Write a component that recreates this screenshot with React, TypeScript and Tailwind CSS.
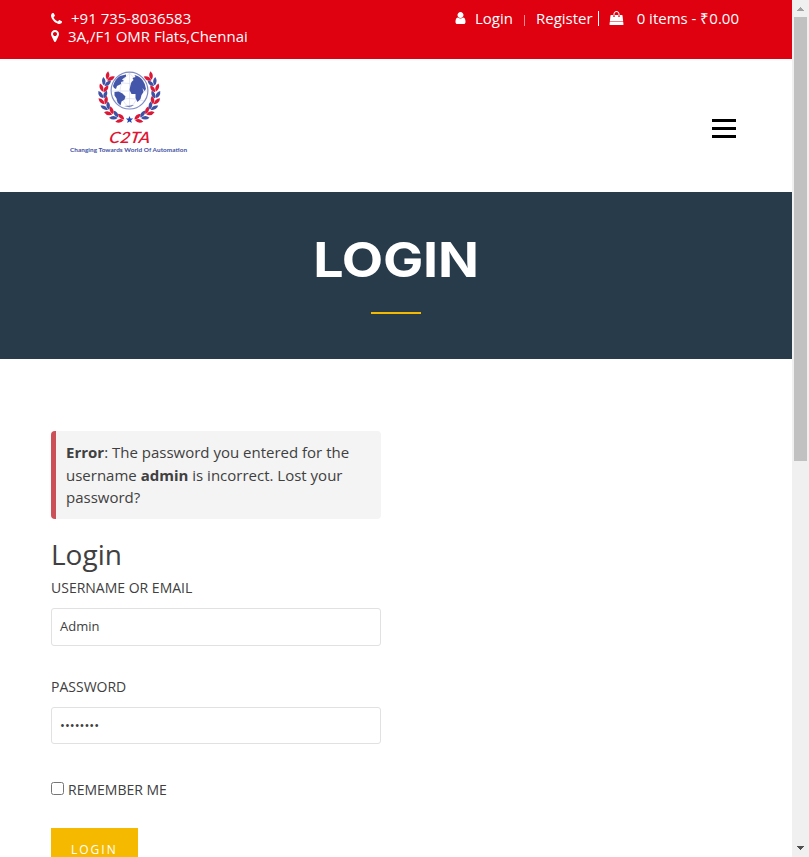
import React from "react";

const PHONE =
  "M1600 1240q0 27-10 70.5t-21 68.5q-21 50-122 106-94 51-186 51-27 0-53-3.5t-57.5-12.5-47-14.5-55.5-20.5-49-18q-98-35-175-83-127-79-264-216t-216-264q-48-77-83-175-3-9-18-49t-20.5-55.5-14.5-47-12.5-57.5-3.5-53q0-92 51-186 56-101 106-122 25-11 68.5-21t70.5-10q14 0 21 3 18 6 53 76 11 19 30 54t35 63.5 31 53.5q3 4 17.5 25t21.5 35.5 7 28.5q0 20-28.5 50t-62 55-62 53-28.5 46q0 9 5 22.5t8.5 20.5 14 24 11.5 19q76 137 174 235t235 174q2 1 19 11.5t24 14 20.5 8.5 22.5 5q18 0 46-28.5t53-62 55-62 50-28.5q14 0 28.5 7t35.5 21.5 25 17.5q25 15 53.5 31t63.5 35 54 30q70 35 76 53 3 7 3 21z";
const MARKER =
  "M1152 640q0-106-75-181t-181-75-181 75-75 181 75 181 181 75 181-75 75-181zm256 0q0 109-33 179l-364 774q-16 33-47.5 52t-67.5 19-67.5-19-46.5-52l-365-774q-33-70-33-179 0-212 150-362t362-150 362 150 150 362z";
const USER =
  "M1536 1399q0 109-62.5 187t-150.5 78h-854q-88 0-150.5-78t-62.5-187q0-85 8.5-160.5t31.5-152 58.5-131 94-89 134.5-34.5q131 128 313 128t313-128q76 0 134.5 34.5t94 89 58.5 131 31.5 152 8.5 160.5zm-256-887q0 159-112.5 271.5t-271.5 112.5-271.5-112.5-112.5-271.5 112.5-271.5 271.5-112.5 271.5 112.5 112.5 271.5z";
const BAG =
  "M1757 1408l35 313q3 28-16 50-19 21-48 21h-1664q-29 0-48-21-19-22-16-50l35-313h1722zm-93-839l86 775h-1708l86-775q3-24 21-40.5t43-16.5h256v128q0 53 37.5 90.5t90.5 37.5 90.5-37.5 37.5-90.5v-128h384v128q0 53 37.5 90.5t90.5 37.5 90.5-37.5 37.5-90.5v-128h256q25 0 43 16.5t21 40.5zm-384-185v256q0 26-19 45t-45 19-45-19-19-45v-256q0-106-75-181t-181-75-181 75-75 181v256q0 26-19 45t-45 19-45-19-19-45v-256q0-159 112.5-271.5t271.5-112.5 271.5 112.5 112.5 271.5z";

function Leaves() {
  const steps = [0, 1, 2, 3, 4, 5, 6, 7, 8];
  return (
    <>
      {steps.map((i) => {
        const angle = 110 + i * 13.8;
        const rad = (angle * Math.PI) / 180;
        const leaf = (r: number, turn: number, fill: string) => (
          <path
            d="M-4.300 0Q0-3.600 4.300 0Q0 3.600-4.300 0z"
            fill={fill}
            transform={`translate(${r * Math.cos(rad)} ${r * Math.sin(rad)}) rotate(${angle + turn})`}
          />
        );
        return (
          <g key={i}>
            {leaf(24, 112, i % 2 ? "#3f51a5" : "#dc1837")}
            {leaf(28.6, 58, i % 2 ? "#3f51a5" : "#dc1837")}
          </g>
        );
      })}
    </>
  );
}

function Logo() {
  return (
    <svg width="120" height="92" viewBox="69 66 120 92" className="block" aria-label="C2TA">
      <g transform="translate(129.3 94)">
        <Leaves />
        <g transform="scale(-1 1)">
          <Leaves />
        </g>
      </g>
      <circle cx="129.5" cy="90.6" r="18.4" fill="#fff" stroke="#7f8bc4" strokeWidth="1.2" />
      <g fill="none" stroke="#d3d7ea" strokeWidth=".6">
        <path d="M129.500 73v35M112 91h35M115 81q14 5 29 0M115 101q14-5 29 0M129.500 73q-19 18 0 35M129.500 73q19 18 0 35" />
      </g>
      <g fill="#4456aa">
        <path d="M113 86q2-7 7-10l6-1.500 0 2-4 3 2 1.500-3 1 0 2-4 2-1 3-2-1z" />
        <path d="M114.500 92l4-.5 4 2 3 3-1 3-3 2-1 4-3-3-1-4-2-3z" />
        <path d="M131.500 82l2-2-1-2 3-1-1-2q5 1 8 5 3 4 3.500 9l-1.500 2-2-3 1 4-2 3-1 4-3 3-2-4 0-4-4 0-2-4 1-5z" />
        <path d="M124 106q6 0 10-1-3 3-10 1z" />
      </g>
      <path d="M129.500 116l1 2.500 2.700.1-2.100 1.700.7 2.600-2.300-1.500-2.300 1.500.7-2.600-2.100-1.700 2.700-.1z" fill="#2447b0" />
      <g transform="translate(108.500 143) skewX(-10)">
        <text fill="#e01534" fontSize="15.500" fontFamily="Lato, sans-serif" fontStyle="italic" fontWeight="600" textLength="41" lengthAdjust="spacingAndGlyphs">C2TA</text>
      </g>
      <text x="70" y="152.300" fill="#3f51a5" fontSize="6.400" fontFamily="Lato, sans-serif" fontWeight="700" textLength="117">Changing Towards World Of Automation</text>
    </svg>
  );
}

function TopBar() {
  return (
    <div className="flex h-[59px] justify-between bg-[#df0010] pl-[51px] pr-[53px] pt-[9px] text-[15px] leading-[18px] text-white">
      <div className="whitespace-nowrap">
        <div className="flex items-center">
          <svg width="11" height="11" viewBox="192 128 1408 1408" fill="currentColor" className="mr-[9px]"><path d={PHONE} /></svg>
          +91 735-8036583
        </div>
        <div className="flex items-center">
          <svg width="8" height="12" viewBox="384 128 1024 1536" fill="currentColor" className="mr-[9px]"><path d={MARKER} /></svg>
          3A,/F1 OMR Flats,Chennai
        </div>
      </div>
      <div className="flex h-[18px] items-center whitespace-nowrap">
        <svg width="11" height="12" viewBox="256 128 1280 1536" fill="currentColor" className="mr-[9px]"><path d={USER} /></svg>
        <span>Login</span>
        <span className="ml-[11px] mr-[11px] mt-1 h-[11px] w-px bg-[#f58a90]" />
        <span>Register</span>
        <span className="ml-[5px] mr-2.5 h-[15px] w-px bg-white" />
        <svg width="15" height="14" viewBox="0 0 1792 1792" fill="currentColor" className="mr-[13px]"><path d={BAG} /></svg>
        <span>0 items - ₹0.00</span>
      </div>
    </div>
  );
}

function Scrollbar() {
  return (
    <div className="flex h-[857px] w-[17px] flex-col items-center bg-[#f0f0f0]">
      <svg width="17" height="17" shapeRendering="crispEdges" className="shrink-0"><path d="M8 7h1v1h1v1h1v1h1v1H5v-1h1V9h1V8h1z" fill="#a3a3a3" /></svg>
      <div className="h-[444px] w-[13px] bg-[#c1c1c1]" />
      <svg width="17" height="17" shapeRendering="crispEdges" className="mt-auto shrink-0"><path d="M5 6h7v1h-1v1h-1v1H9v1H8V9H7V8H6V7H5z" fill="#505050" /></svg>
    </div>
  );
}

export default function App() {
  return (
    <div className="flex h-[857px] w-[809px] overflow-hidden bg-white font-['Open_Sans',sans-serif] text-[#404040]">
      <div className="w-[792px] overflow-hidden">
        <TopBar />
        <header className="flex h-[133px] justify-between pl-[69px] pr-14 pt-[7px]">
          <Logo />
          <button className="mt-[53px] flex h-[19px] w-6 flex-col justify-between" aria-label="Menu">
            <span className="h-[3px] w-full bg-black" />
            <span className="h-[3px] w-full bg-black" />
            <span className="h-[3px] w-full bg-black" />
          </button>
        </header>
        <section className="flex h-[167px] flex-col items-center bg-[#283b4b] pt-[38px]">
          <h1 className="scale-x-[1.12] font-[Inter,sans-serif] text-[48px] font-bold leading-[60px] tracking-[-0.2px] text-white">LOGIN</h1>
          <div className="mt-[22px] h-0.5 w-[50px] bg-[#f5ba00]" />
        </section>
        <main className="ml-[51px] w-[330px] pt-[72px]">
          <div className="h-[88px] whitespace-nowrap rounded border-l-[5px] border-[#cb5058] bg-[#f4f4f4] pl-2.5 pt-2.5 text-[15px] leading-[22.5px]">
            <p><b>Error</b>: The password you entered for the</p>
            <p>username <b>admin</b> is incorrect. Lost your</p>
            <p>password?</p>
          </div>
          <h2 className="mt-[15px] text-[28px] leading-10">Login</h2>
          <form>
            <label className="mt-[3px] block text-sm leading-[22px]">USERNAME OR EMAIL</label>
            <div className="mt-[9px] flex h-[38px] items-center rounded-[3px] border border-[#e1e1e1] pl-2 text-[13px]">Admin</div>
            <label className="mt-[30px] block text-sm leading-[22px]">PASSWORD</label>
            <div className="mt-[9px] flex h-[37px] items-center rounded-[3px] border border-[#e1e1e1] pl-2 text-[13px]">••••••••</div>
            <label className="mt-[34px] flex h-6 items-center text-sm">
              <span className="mb-[3px] mr-1 h-[13px] w-[13px] rounded-[2.5px] border border-[#767676] bg-white" />
              REMEMBER ME
            </label>
            <div className="mt-[26px] h-[45px] w-[87px] bg-[#f5ba00] pl-5 pt-3 text-xs leading-5 tracking-[2px] text-white">LOGIN</div>
          </form>
        </main>
      </div>
      <Scrollbar />
    </div>
  );
}
